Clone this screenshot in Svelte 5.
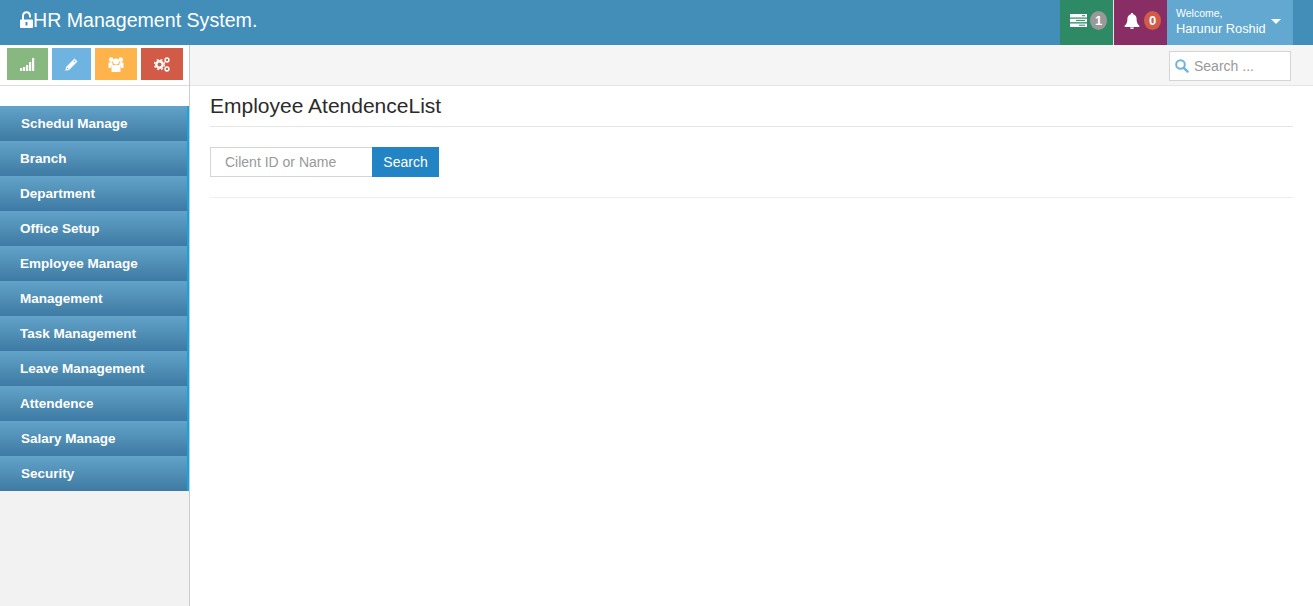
<script>
  const menu = [
    { label: 'Schedul Manage', shift: true },
    { label: 'Branch' },
    { label: 'Department' },
    { label: 'Office Setup' },
    { label: 'Employee Manage' },
    { label: 'Management' },
    { label: 'Task Management' },
    { label: 'Leave Management' },
    { label: 'Attendence' },
    { label: 'Salary Manage', shift: true },
    { label: 'Security', shift: true }
  ];
</script>

<div class="page">
  <header class="topbar">
    <a class="brand" href="#top">
      <svg class="lock" viewBox="0 0 13 17" width="13" height="17">
        <path d="M2 9V5C2 2 3.800 0.300 6.500 0.300S11 2 11 5v1.500H9V5C9 3.300 8 2.300 6.500 2.300S4 3.300 4 5v4z" fill="#fff" />
        <rect x="0" y="8.500" width="13" height="8.500" rx="1" fill="#fff" />
        <rect x="5.500" y="11" width="2" height="3.500" fill="#438eb9" />
      </svg>
      <span>HR Management System.</span>
    </a>
    <div class="top-actions">
      <div class="tile green">
        <svg viewBox="0 0 17 13" width="17" height="13">
          <rect y="0" width="17" height="3.500" fill="#fff" />
          <rect y="4.700" width="17" height="3.500" fill="#fff" />
          <rect y="9.500" width="17" height="3.500" fill="#fff" />
          <rect x="12" y="1.200" width="3" height="1" fill="#2e8965" />
          <rect x="6" y="5.900" width="9" height="1" fill="#2e8965" />
          <rect x="9" y="10.700" width="6" height="1" fill="#2e8965" />
        </svg>
        <span class="badge grey">1</span>
      </div>
      <div class="tile purple">
        <svg viewBox="0 0 16 16" width="16" height="16">
          <path d="M8 0c.8 0 1.200.5 1.200 1.200 2.300.6 3.400 2.400 3.400 4.800 0 3.500.9 5.200 2.700 6.500V14H0.700v-1.500C2.500 11.200 3.400 9.500 3.400 6c0-2.400 1.100-4.200 3.400-4.800C6.800.5 7.200 0 8 0z" fill="#fff" />
          <path d="M6 14.400h4a2 1.600 0 0 1-4 0z" fill="#fff" />
        </svg>
        <span class="badge red">0</span>
      </div>
      <div class="user">
        <div class="user-text">
          <small>Welcome,</small>
          <span>Harunur Roshid</span>
        </div>
        <span class="caret"></span>
      </div>
    </div>
  </header>

  <div class="body-row">
    <aside class="sidebar">
      <div class="shortcuts">
        <button class="short s-green" aria-label="Stats">
          <svg viewBox="0 0 15 13" width="15" height="13">
            <rect x="0" y="10" width="2.200" height="3" fill="#fff" />
            <rect x="3" y="9" width="2.200" height="4" fill="#fff" />
            <rect x="6" y="7" width="2.200" height="6" fill="#fff" />
            <rect x="9" y="4" width="2.200" height="9" fill="#fff" />
            <rect x="12" y="0" width="2.200" height="13" fill="#fff" />
          </svg>
        </button>
        <button class="short s-blue" aria-label="Edit">
          <svg viewBox="0 0 13 13" width="13" height="13">
            <path d="M9.500 0.500l3 3-8.400 8.400L0.300 12.700l.8-3.800zM2.300 9.500l-.5 1.700 1.700-.5zM8.400 3l1.600 1.600.7-.7L9.100 2.300z" fill="#fff" fill-rule="evenodd" />
          </svg>
        </button>
        <button class="short s-orange" aria-label="Users">
          <svg viewBox="0 0 16 15" width="16" height="15">
            <circle cx="8" cy="4.600" r="3" fill="#fff" />
            <circle cx="3.200" cy="2.600" r="2.300" fill="#fff" />
            <circle cx="12.800" cy="2.600" r="2.300" fill="#fff" />
            <path d="M3.500 9.500C3.500 8.300 4.500 8 5.500 8h5c1 0 2 .3 2 1.500V15h-9z" fill="#fff" />
            <path d="M0.500 6.500C.5 5.700 1 5.300 1.700 5.300h2.500L4.800 8 3 9.500V11H0.500zM15.500 6.500c0-.8-.5-1.200-1.200-1.200h-2.500L11.200 8 13 9.500V11h2.500z" fill="#fff" />
          </svg>
        </button>
        <button class="short s-red" aria-label="Settings">
          <svg viewBox="0 0 16 15" width="16" height="15">
            <circle cx="5.500" cy="7.500" r="3.200" fill="none" stroke="#fff" stroke-width="2.400" />
            <circle cx="5.500" cy="7.500" r="5" fill="none" stroke="#fff" stroke-width="1.400" stroke-dasharray="2 2" />
            <circle cx="13" cy="3" r="1.900" fill="none" stroke="#fff" stroke-width="1.500" />
            <circle cx="13" cy="12" r="1.900" fill="none" stroke="#fff" stroke-width="1.500" />
          </svg>
        </button>
      </div>
      <div class="menu-wrap">
        <nav class="menu">
          {#each menu as item}
            <a href="#top" class:shift={item.shift}>{item.label}</a>
          {/each}
        </nav>
      </div>
    </aside>

    <main class="main">
      <div class="crumbs">
        <div class="nav-search">
          <svg viewBox="0 0 14 14" width="14" height="14">
            <circle cx="5.500" cy="5.500" r="4.300" fill="none" stroke="#6fb3e0" stroke-width="2" />
            <path d="M8.800 8.800l3.800 3.800" stroke="#6fb3e0" stroke-width="2.400" stroke-linecap="round" />
          </svg>
          <input type="text" placeholder="Search ..." />
        </div>
      </div>
      <div class="content">
        <h1>Employee AtendenceList</h1>
        <form class="search-form" on:submit|preventDefault>
          <input type="text" placeholder="Cilent ID or Name" />
          <button type="submit">Search</button>
        </form>
      </div>
    </main>
  </div>
</div>

<style>
  :global(body) {
    margin: 0;
    font-family: "Liberation Sans", Arial, sans-serif;
    background: #fff;
    overflow: hidden;
  }

  .page {
    height: 606px;
    display: flex;
    flex-direction: column;
  }

  .topbar {
    height: 45px;
    flex: none;
    background: #438eb9;
    display: flex;
    justify-content: space-between;
    color: #fff;
  }

  .brand {
    display: flex;
    align-items: center;
    padding: 0 0 4px 20px;
    color: #fff;
    text-decoration: none;
    font-size: 19.600px;
  }

  .lock {
    flex: none;
    margin-top: -3px;
  }

  .top-actions {
    display: flex;
    margin-right: 20px;
  }

  .tile {
    display: flex;
    align-items: center;
    padding-bottom: 4px;
    box-sizing: border-box;
  }

  .green {
    width: 54px;
    background: #2e8965;
    border-right: 1px solid #e1e6ea;
    padding-left: 10px;
    gap: 3px;
  }

  .purple {
    width: 53px;
    background: #892e65;
    padding-left: 10px;
    gap: 4px;
  }

  .badge {
    width: 17px;
    height: 19px;
    border-radius: 9px / 10px;
    display: flex;
    align-items: center;
    justify-content: center;
    font-size: 13px;
    font-weight: bold;
    color: #fff;
  }

  .grey {
    background: #999;
  }

  .red {
    background: #d15b47;
  }

  .user {
    width: 126px;
    background: #62a8d1;
    display: flex;
    box-sizing: border-box;
    padding: 7px 0 0 9px;
  }

  .user-text {
    display: flex;
    flex-direction: column;
    font-size: 12.800px;
    line-height: 17px;
  }

  .user-text small {
    font-size: 10.500px;
    line-height: 13px;
  }

  .caret {
    width: 0;
    height: 0;
    border-left: 5px solid transparent;
    border-right: 5px solid transparent;
    border-top: 5px solid #fff;
    margin: 12px 0 0 5px;
  }

  .body-row {
    flex: 1;
    display: flex;
    min-height: 0;
  }

  .sidebar {
    width: 190px;
    flex: none;
    box-sizing: border-box;
    background: #f2f2f2;
    border-right: 1px solid #ccc;
    display: flex;
    flex-direction: column;
  }

  .shortcuts {
    height: 41px;
    flex: none;
    background: #fff;
    border-bottom: 1px solid #ddd;
    display: flex;
    gap: 4px;
    padding: 3px 0 0 7px;
    box-sizing: border-box;
  }

  .short {
    height: 32px;
    border: 0;
    padding: 0;
    display: flex;
    align-items: center;
    justify-content: center;
  }

  .s-green {
    width: 41px;
    background: #87b87f;
  }

  .s-blue {
    width: 39px;
    background: #6fb3e0;
  }

  .s-orange {
    width: 42px;
    background: #ffb44b;
  }

  .s-red {
    width: 42px;
    background: #d15b47;
  }

  .menu-wrap {
    padding-top: 20px;
    background: #fff;
  }

  .menu {
    display: flex;
    flex-direction: column;
    border-right: 2px solid #0ea5e9;
  }

  .menu a {
    height: 35px;
    box-sizing: border-box;
    padding: 10px 0 0 20px;
    background: linear-gradient(to bottom, #62a3c9, #3e7aa3);
    color: #fff;
    font-size: 13.500px;
    font-weight: bold;
    line-height: 15px;
    text-decoration: none;
  }

  .menu a.shift {
    padding-left: 21px;
  }

  .main {
    flex: 1;
    min-width: 0;
    display: flex;
    flex-direction: column;
  }

  .crumbs {
    height: 41px;
    flex: none;
    box-sizing: border-box;
    background: #f5f5f5;
    border-bottom: 1px solid #e5e5e5;
    display: flex;
    justify-content: flex-end;
    padding: 6px 22px 0 0;
  }

  .nav-search {
    width: 122px;
    height: 30px;
    box-sizing: border-box;
    border: 1px solid #d5d5d5;
    background: #fff;
    display: flex;
    align-items: center;
    padding-left: 5px;
    gap: 5px;
  }

  .nav-search input {
    border: 0;
    outline: 0;
    padding: 0;
    width: 90px;
    font: 14px "Liberation Sans", Arial, sans-serif;
    background: transparent;
  }

  .content {
    padding: 0 20px;
  }

  h1 {
    margin: 0;
    height: 41px;
    box-sizing: border-box;
    border-bottom: 1px solid #e5e5e5;
    font-size: 21px;
    font-weight: normal;
    color: #2b2b2b;
    line-height: 40px;
  }

  .search-form {
    display: flex;
    padding: 20px 0;
    border-bottom: 1px solid #eee;
  }

  .search-form input {
    width: 162px;
    height: 30px;
    box-sizing: border-box;
    border: 1px solid #d5d5d5;
    border-right: 0;
    padding: 0 14px;
    font: 14px "Liberation Sans", Arial, sans-serif;
    outline: 0;
  }

  .search-form button {
    width: 67px;
    height: 30px;
    border: 0;
    background: #2283c5;
    color: #fff;
    font: 14px "Liberation Sans", Arial, sans-serif;
  }

  input::placeholder {
    color: #999;
    opacity: 1;
  }
</style>
